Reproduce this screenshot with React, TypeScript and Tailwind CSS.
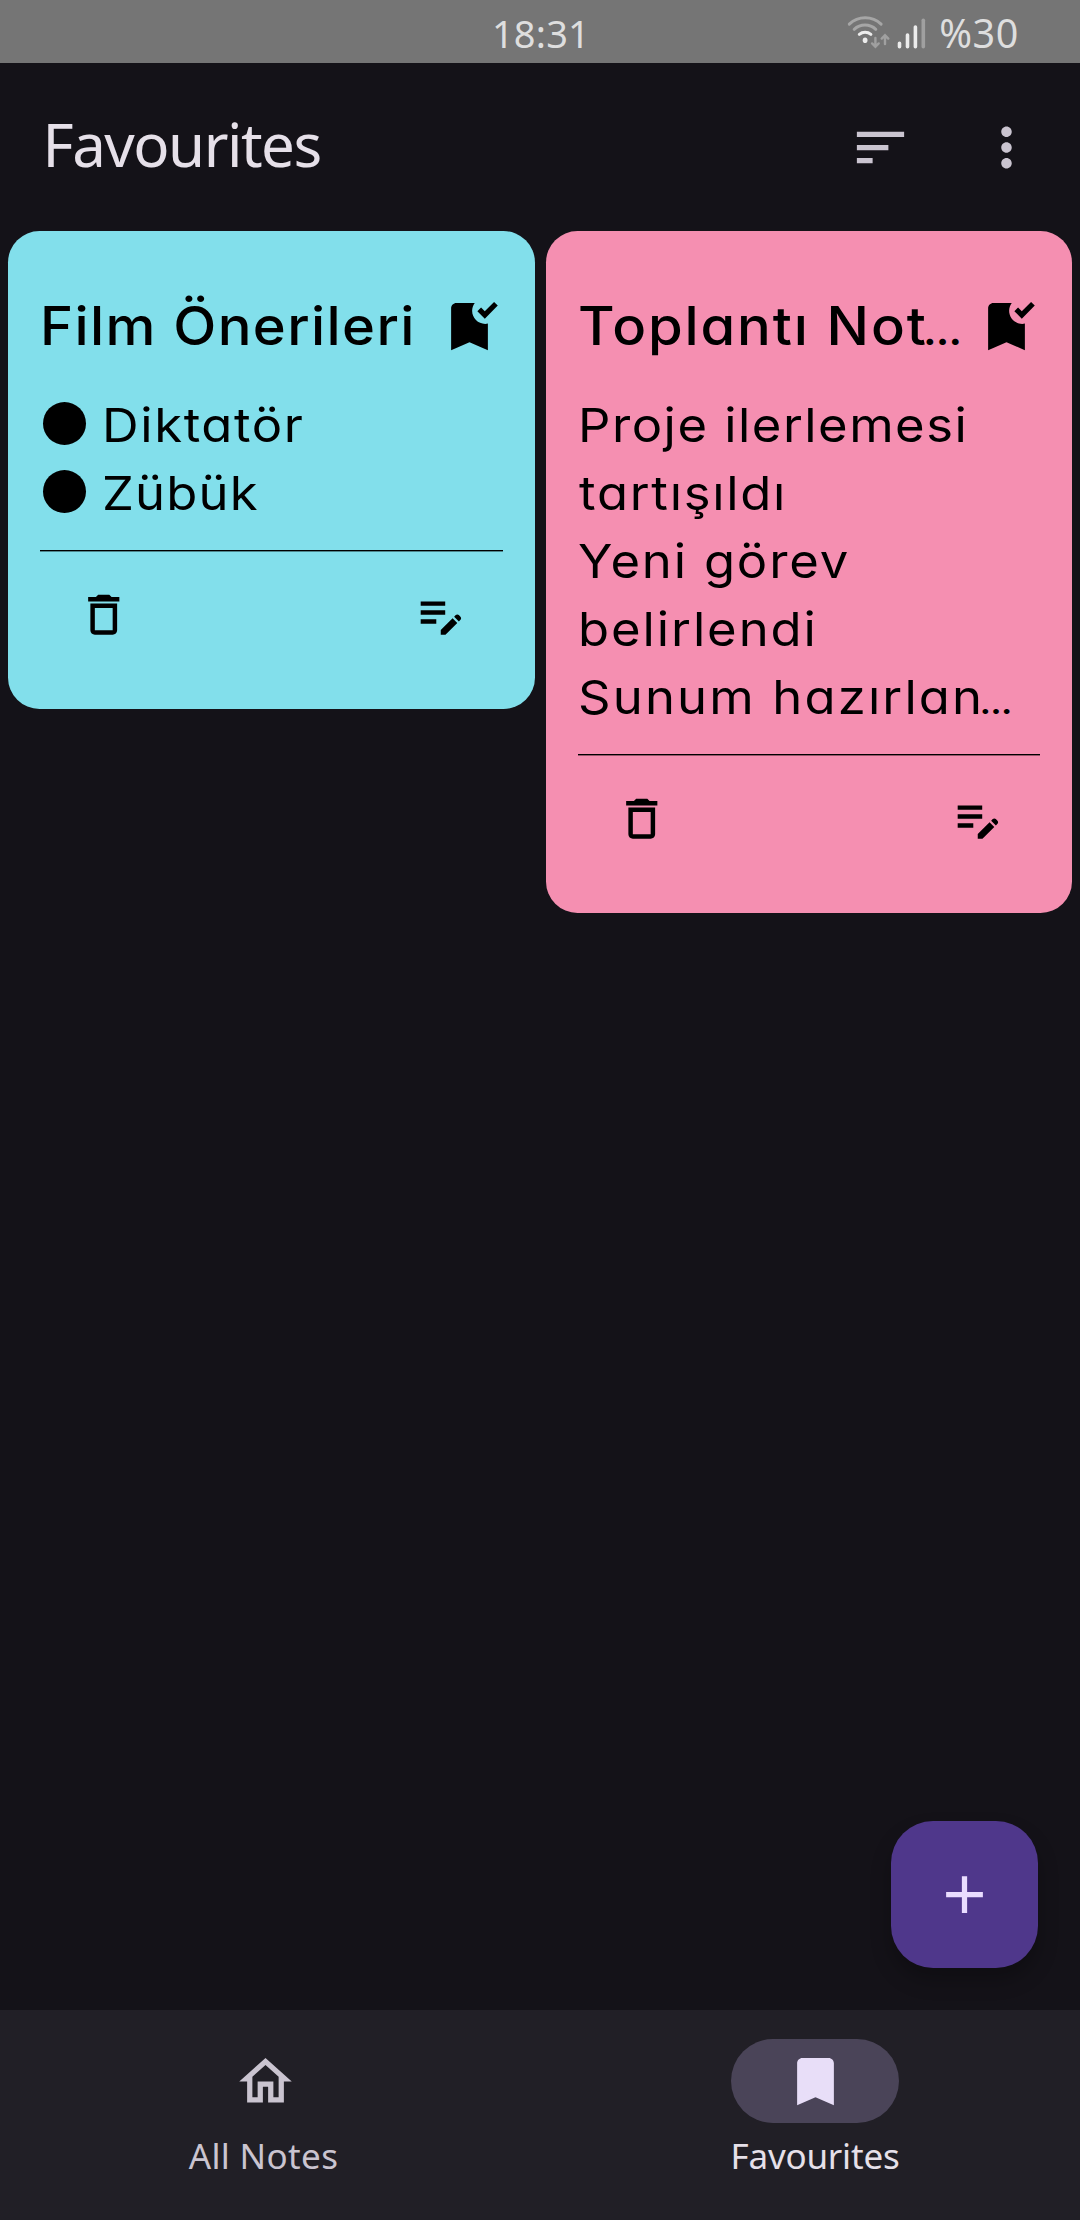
import type { ReactNode } from 'react';

const ICONS = {
  sort: 'M3 18h6v-2H3v2zM3 6v2h18V6H3zm0 7h12v-2H3v2z',
  more: 'M12 8c1.1 0 2-.9 2-2s-.9-2-2-2-2 .9-2 2 .9 2 2 2zm0 2c-1.1 0-2 .9-2 2s.9 2 2 2 2-.9 2-2-.9-2-2-2zm0 6c-1.1 0-2 .9-2 2s.9 2 2 2 2-.9 2-2-.9-2-2-2z',
  bookmarkAdded:
    'M19 21l-7-3-7 3V5c0-1.1.9-2 2-2h7c-.63.84-1 1.87-1 3 0 2.76 2.24 5 5 5 .34 0 .68-.03 1-.1V21zM17.83 9L15 6.17l1.41-1.41 1.41 1.41 3.54-3.54 1.41 1.41L17.83 9z',
  trash:
    'M16 9v10H8V9h8m-1.5-6h-5l-1 1H5v2h14V4h-3.5l-1-1zM18 7H6v12c0 1.1.9 2 2 2h8c1.1 0 2-.9 2-2V7z',
  edit: 'M3 10h11v2H3v-2zm0-2h11V6H3v2zm0 8h7v-2H3v2zm15.01-3.13.71-.71c.39-.39 1.02-.39 1.41 0l.71.71c.39.39.39 1.02 0 1.41l-.71.71-2.12-2.12zm-.71.71-5.3 5.3V21h2.12l5.3-5.3-2.12-2.12z',
  plus: 'M19 13h-6v6h-2v-6H5v-2h6V5h2v6h6v2z',
  home: 'M12 5.69l5 4.5V18h-2v-6H9v6H7v-7.81l5-4.5M12 3L2 12h3v8h6v-6h2v6h6v-8h3L12 3z',
  bookmark: 'M17 3H7c-1.1 0-2 .9-2 2v16l7-3 7 3V5c0-1.1-.9-2-2-2z',
};

function Icon({ name, className = '' }: { name: keyof typeof ICONS; className?: string }) {
  return (
    <svg viewBox="0 0 24 24" fill="currentColor" className={`shrink-0 ${className}`}>
      <path d={ICONS[name]} />
    </svg>
  );
}

function StatusBar() {
  return (
    <div className="grid h-[63px] grid-cols-[1fr_auto_1fr] items-center bg-[#757575] text-[#dedede]">
      <span />
      <span className="pt-0.5 pl-0.5 text-[38px] leading-none tracking-[0.2px]">18:31</span>
      <div className="flex items-center justify-end pr-[61px]">
        <svg viewBox="846 12 80 38" fill="none" strokeLinecap="round" className="h-[38px] w-20">
          <g stroke="#a6a6a6" strokeWidth="3">
            <path d="M848.3 23.2a23 23 0 0 1 31.8 0" />
            <path d="M853.2 28.3a16 16 0 0 1 21.6 0" />
          </g>
          <path d="M858.3 33.4a9 9 0 0 1 11.6 0" stroke="#ececec" strokeWidth="3" />
          <ellipse cx="864.1" cy="39.3" rx="2.4" ry="2.8" fill="#ececec" />
          <path
            d="M874.4 37v8.6m-3.3-3.2 3.3 3.4 3.3-3.4M884 43v-8.6m-3.3 3.2 3.3-3.4 3.3 3.4"
            stroke="#a0a0a0"
            strokeWidth="2.4"
          />
          <g stroke="#ececec" strokeWidth="3.6">
            <path d="M898.5 42.3v3.4M906.5 34v11.7M914.4 26v19.7" />
            <path d="M922.3 19.3v26.4" stroke="#a0a0a0" />
          </g>
        </svg>
        <span className="ml-3 pt-[5px] text-[39.5px] leading-none tracking-[0.6px]">%30</span>
      </div>
    </div>
  );
}

function Header() {
  return (
    <header className="flex h-[168px] items-center pr-[42px] pl-[42.5px]">
      <h1 className="flex-1 pb-[7px] text-[60px] tracking-[-1.5px] text-[#e6e0e9]">Favourites</h1>
      <Icon name="sort" className="size-[63px] text-[#cac4d0]" />
      <Icon name="more" className="ml-[63px] size-[63px] text-[#cac4d0]" />
    </header>
  );
}

function NoteCard({ title, color, children }: { title: ReactNode; color: string; children: ReactNode }) {
  return (
    <article
      className={`shrink-0 rounded-[31.5px] px-8 pt-16 pb-[67.5px] font-['Inter',sans-serif] text-black [font-feature-settings:'cv11'] ${color}`}
    >
      <div className="flex h-[63px] items-center justify-between pr-0.5">
        <h2 className="w-[370px] origin-left scale-x-[1.06] text-[53px] leading-[63px] font-medium whitespace-nowrap">
          {title}
        </h2>
        <Icon name="bookmarkAdded" className="size-[63px]" />
      </div>
      <div className="mt-[33px] text-[47px] leading-[68px] whitespace-nowrap">{children}</div>
      <div className="mt-[23px] h-0.5 border-b border-black/40 bg-black bg-clip-padding" />
      <div className="mt-[35.5px] flex justify-between pr-9 pl-[37px]">
        <Icon name="trash" className="size-[53.5px]" />
        <Icon name="edit" className="size-[53.5px]" />
      </div>
    </article>
  );
}

function Line({ children, spacing }: { children: ReactNode; spacing: string }) {
  return <p className={`h-[68px] origin-left scale-x-[1.08] ${spacing}`}>{children}</p>;
}

function Bullet({ children, spacing }: { children: string; spacing: string }) {
  return (
    <div className="flex items-center pl-[2.5px]">
      <span className="-mt-[3px] mr-4 size-[43px] rounded-full bg-black" />
      <Line spacing={spacing}>{children}</Line>
    </div>
  );
}

function NavItem({ icon, label, active, spacing }: { icon: 'home' | 'bookmark'; label: string; active?: boolean; spacing: string }) {
  return (
    <div className={`flex w-[550px] shrink-0 flex-col items-center ${active ? 'text-[#e6e0e9]' : 'text-[#cac4d0]'}`}>
      <div
        className={`flex h-[84px] w-[168px] items-center justify-center rounded-full ${active ? 'bg-[#4a4458] text-[#e8def8]' : ''}`}
      >
        <Icon name={icon} className="size-[63px]" />
      </div>
      <span className={`mt-[9px] text-[35px] leading-[48px] ${spacing}`}>{label}</span>
    </div>
  );
}

export default function App() {
  return (
    <div className="flex h-[2220px] w-[1080px] flex-col overflow-hidden bg-[#141218] font-['Noto_Sans',sans-serif]">
      <StatusBar />
      <Header />
      <main className="relative flex flex-1 items-start gap-[11px] px-2">
        <NoteCard color="w-[527px] bg-[#82dfeb]" title={<span className="tracking-[1.3px]">Film Önerileri</span>}>
          <Bullet spacing="tracking-[1.5px]">Diktatör</Bullet>
          <Bullet spacing="tracking-[1.1px]">Zübük</Bullet>
        </NoteCard>
        <NoteCard
          color="w-[526px] bg-[#f58fb1]"
          title={
            <>
              <span className="tracking-[1.75px]">Toplantı Not</span>
              <span className="-ml-1 text-[34px] leading-none font-extrabold">…</span>
            </>
          }
        >
          <Line spacing="tracking-[1.38px]">Proje ilerlemesi</Line>
          <Line spacing="pl-px tracking-[1.6px]">tartışıldı</Line>
          <Line spacing="tracking-[1.7px]">Yeni görev</Line>
          <Line spacing="tracking-[1.8px]">belirlendi</Line>
          <Line spacing="tracking-[2px]">
            Sunum hazırlan
            <span className="-ml-1 text-[28px] leading-none font-extrabold tracking-normal">…</span>
          </Line>
        </NoteCard>
        <button className="absolute right-[42px] bottom-[42px] flex size-[147px] items-center justify-center rounded-[42px] bg-[#4f378b] text-[#eaddff] shadow-[0_12px_20px_rgba(0,0,0,0.25)]">
          <Icon name="plus" className="size-[63px]" />
        </button>
      </main>
      <nav className="flex h-[210px] justify-center bg-[#211f26] pt-[29px]">
        <NavItem icon="home" label="All Notes" spacing="pr-[3px] tracking-[0.36px]" />
        <NavItem icon="bookmark" label="Favourites" active spacing="tracking-[-0.2px]" />
      </nav>
    </div>
  );
}
